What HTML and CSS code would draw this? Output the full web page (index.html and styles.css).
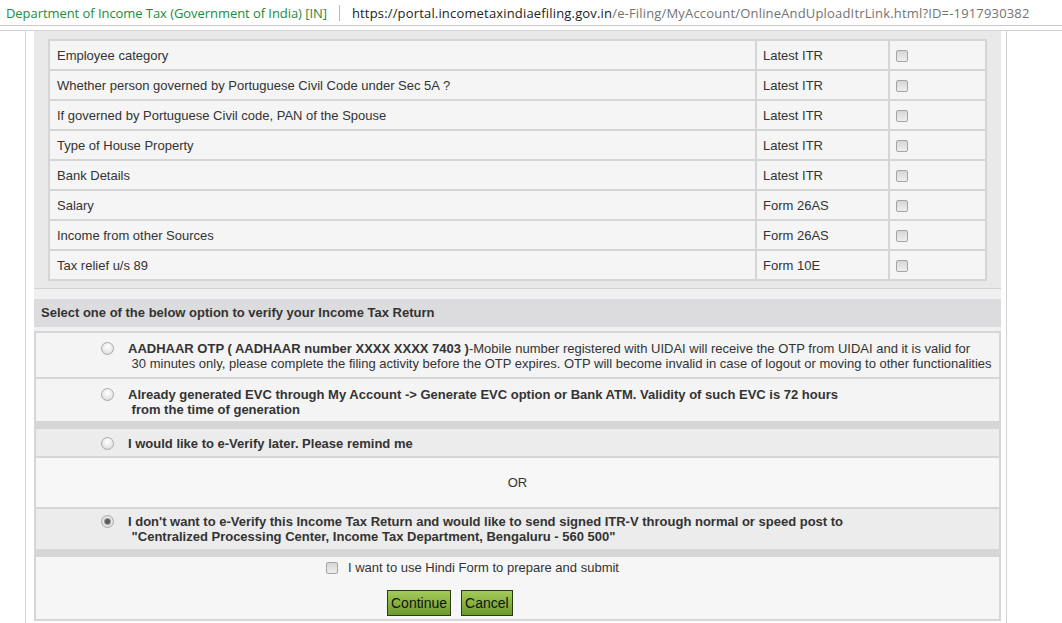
FILE: index.html
```html
<!DOCTYPE html>
<html>
<head>
<meta charset="utf-8">
<title>Online And Upload ITR</title>
<link rel="stylesheet" href="styles.css">
</head>
<body>
<div class="topbar">
  <span class="site">Department of Income Tax (Government of India) [IN]</span>
  <span class="sep"></span>
  <span class="url"><span class="host">https://portal.incometaxindiaefiling.gov.in</span><span class="path">/e-Filing/MyAccount/OnlineAndUploadItrLink.html?ID=-1917930382</span></span>
</div>
<div class="rule"></div>
<div class="page">
  <div class="panel">
    <div class="table-wrap">
      <table class="fields">
        <tr><td class="c1">Employee category</td><td class="c2">Latest ITR</td><td class="c3"><span class="chk"></span></td></tr>
        <tr><td class="c1">Whether person governed by Portuguese Civil Code under Sec 5A ?</td><td class="c2">Latest ITR</td><td class="c3"><span class="chk"></span></td></tr>
        <tr><td class="c1">If governed by Portuguese Civil code, PAN of the Spouse</td><td class="c2">Latest ITR</td><td class="c3"><span class="chk"></span></td></tr>
        <tr><td class="c1">Type of House Property</td><td class="c2">Latest ITR</td><td class="c3"><span class="chk"></span></td></tr>
        <tr><td class="c1">Bank Details</td><td class="c2">Latest ITR</td><td class="c3"><span class="chk"></span></td></tr>
        <tr><td class="c1">Salary</td><td class="c2">Form 26AS</td><td class="c3"><span class="chk"></span></td></tr>
        <tr><td class="c1">Income from other Sources</td><td class="c2">Form 26AS</td><td class="c3"><span class="chk"></span></td></tr>
        <tr><td class="c1">Tax relief u/s 89</td><td class="c2">Form 10E</td><td class="c3"><span class="chk"></span></td></tr>
      </table>
    </div>

    <div class="sec-head">Select one of the below option to verify your Income Tax Return</div>

    <div class="options">
      <div class="opt opt1">
        <span class="radio"></span>
        <div class="opt-text"><b>AADHAAR OTP ( AADHAAR number XXXX XXXX 7403 )</b>-Mobile number registered with UIDAI will receive the OTP from UIDAI and it is valid for<br>&nbsp;30 minutes only, please complete the filing activity before the OTP expires. OTP will become invalid in case of logout or moving to other functionalities</div>
      </div>
      <div class="opt opt2">
        <span class="radio"></span>
        <div class="opt-text"><b>Already generated EVC through My Account -&gt; Generate EVC option or Bank ATM. Validity of such EVC is 72 hours<br>&nbsp;from the time of generation</b></div>
      </div>
      <div class="opt opt3">
        <span class="radio"></span>
        <div class="opt-text"><b>I would like to e-Verify later. Please remind me</b></div>
      </div>
      <div class="or-row">OR</div>
      <div class="opt opt4">
        <span class="radio checked"></span>
        <div class="opt-text"><b>I don't want to e-Verify this Income Tax Return and would like to send signed ITR-V through normal or speed post to<br>&nbsp;"Centralized Processing Center, Income Tax Department, Bengaluru - 560 500"</b></div>
      </div>
      <div class="submit-row">
        <div class="hindi-line"><span class="chk"></span><span class="hindi-label">I want to use Hindi Form to prepare and submit</span></div>
        <div class="buttons">
          <button class="btn" type="button">Continue</button>
          <button class="btn" type="button">Cancel</button>
        </div>
      </div>
    </div>
  </div>
</div>
</body>
</html>
```

FILE: styles.css
```css
html, body {
  margin: 0;
  padding: 0;
  background: #ffffff;
}

body {
  font-family: "Liberation Sans", Arial, sans-serif;
  font-size: 13px;
  color: #333333;
  overflow: hidden;
}

.topbar {
  box-sizing: border-box;
  height: 26px;
  border-bottom: 1px solid #c9c9c9;
  display: flex;
  align-items: center;
  padding-left: 6px;
  font-family: "Open Sans", "Noto Sans", sans-serif;
  font-size: 13px;
  white-space: nowrap;
}

.site {
  color: #1e8a3e;
  letter-spacing: -0.06px;
}

.sep {
  display: inline-block;
  width: 1px;
  height: 16px;
  background: #b9b9b9;
  margin: 0 12px;
}

.url {
  letter-spacing: 0.17px;
}

.host {
  color: #222222;
}

.path {
  color: #737373;
}

.rule {
  margin-top: 4px;
  border-top: 1px solid #d4d4d4;
}

.page {
  box-sizing: border-box;
  width: 982px;
  margin-left: 25px;
  min-height: 600px;
  border-left: 1px solid #d6d0d6;
  border-right: 1px solid #d6d0d6;
  padding: 0 5px 0 8px;
}

.panel {
  background: #f0f0f0;
}

.table-wrap {
  background: #e9e9e9;
  padding: 8px 14px 7px;
  border-bottom: 1px solid #d2d2d2;
}

.fields {
  width: 100%;
  border-collapse: separate;
  border-spacing: 2px;
  background: #d5d5d5;
}

.fields td {
  height: 28px;
  padding: 0 6px;
  background: #f5f5f5;
  line-height: 15px;
  vertical-align: middle;
  color: #333333;
}

.fields .c1 {
  padding-left: 7px;
}

.fields .c2 {
  width: 119px;
}

.fields .c3 {
  width: 83px;
}

.chk {
  display: inline-block;
  box-sizing: border-box;
  width: 12px;
  height: 12px;
  border: 1px solid #a4a4a4;
  border-radius: 2px;
  background: linear-gradient(#d6d6d6, #eeeeee);
  vertical-align: middle;
}

.sec-head {
  margin-top: 10px;
  height: 28px;
  line-height: 28px;
  background: #dcdcde;
  font-weight: bold;
  padding-left: 7px;
  color: #333333;
}

.options {
  margin-top: 4px;
  background: #d6d6d6;
}

.opt {
  display: flex;
  align-items: flex-start;
  border: 2px solid #d6d6d6;
  background: #f4f4f4;
  padding-left: 65px;
  line-height: 15px;
  color: #333333;
}

.opt1 {
  padding-top: 8px;
  padding-bottom: 6px;
}

.opt2 {
  border-top: 0;
  padding-top: 8px;
  padding-bottom: 4px;
}

.opt3 {
  margin-top: 4px;
  background: #ececec;
  padding-top: 7px;
  padding-bottom: 5px;
}

.opt4 {
  background: #ececec;
  padding-top: 5px;
  padding-bottom: 5px;
}

.radio {
  flex: none;
  box-sizing: border-box;
  width: 13px;
  height: 13px;
  margin: 1px 14px 0 0;
  border-radius: 50%;
  border: 1px solid #a9a9a9;
  background: radial-gradient(circle at 50% 35%, #ffffff 0, #e9e9e9 55%, #d2d2d2 100%);
}

.radio.checked {
  background: radial-gradient(circle at 50% 50%, #5a5a5a 0, #5a5a5a 2px, #9a9a9a 3px, #e6e6e6 4px, #d4d4d4 100%);
}

.or-row {
  border-left: 2px solid #d6d6d6;
  border-right: 2px solid #d6d6d6;
  background: #f7f7f7;
  text-align: center;
  padding: 17px 0;
  line-height: 15px;
  color: #333333;
}

.submit-row {
  margin-top: 4px;
  border: 2px solid #d6d6d6;
  background: #f6f6f6;
  padding: 3px 0 3px;
}

.hindi-line {
  display: flex;
  align-items: center;
  height: 15px;
  padding-left: 290px;
}

.hindi-label {
  margin-left: 10px;
  line-height: 15px;
  color: #333333;
}

.buttons {
  display: flex;
  gap: 10px;
  margin-top: 15px;
  padding-left: 351px;
}

.btn {
  box-sizing: border-box;
  height: 26px;
  margin: 0;
  padding: 0 3px;
  border: 1px solid #2b3a12;
  background: linear-gradient(#a4cb58, #6b992b);
  font-family: "Liberation Sans", Arial, sans-serif;
  font-size: 14px;
  color: #111111;
  cursor: pointer;
}
```
